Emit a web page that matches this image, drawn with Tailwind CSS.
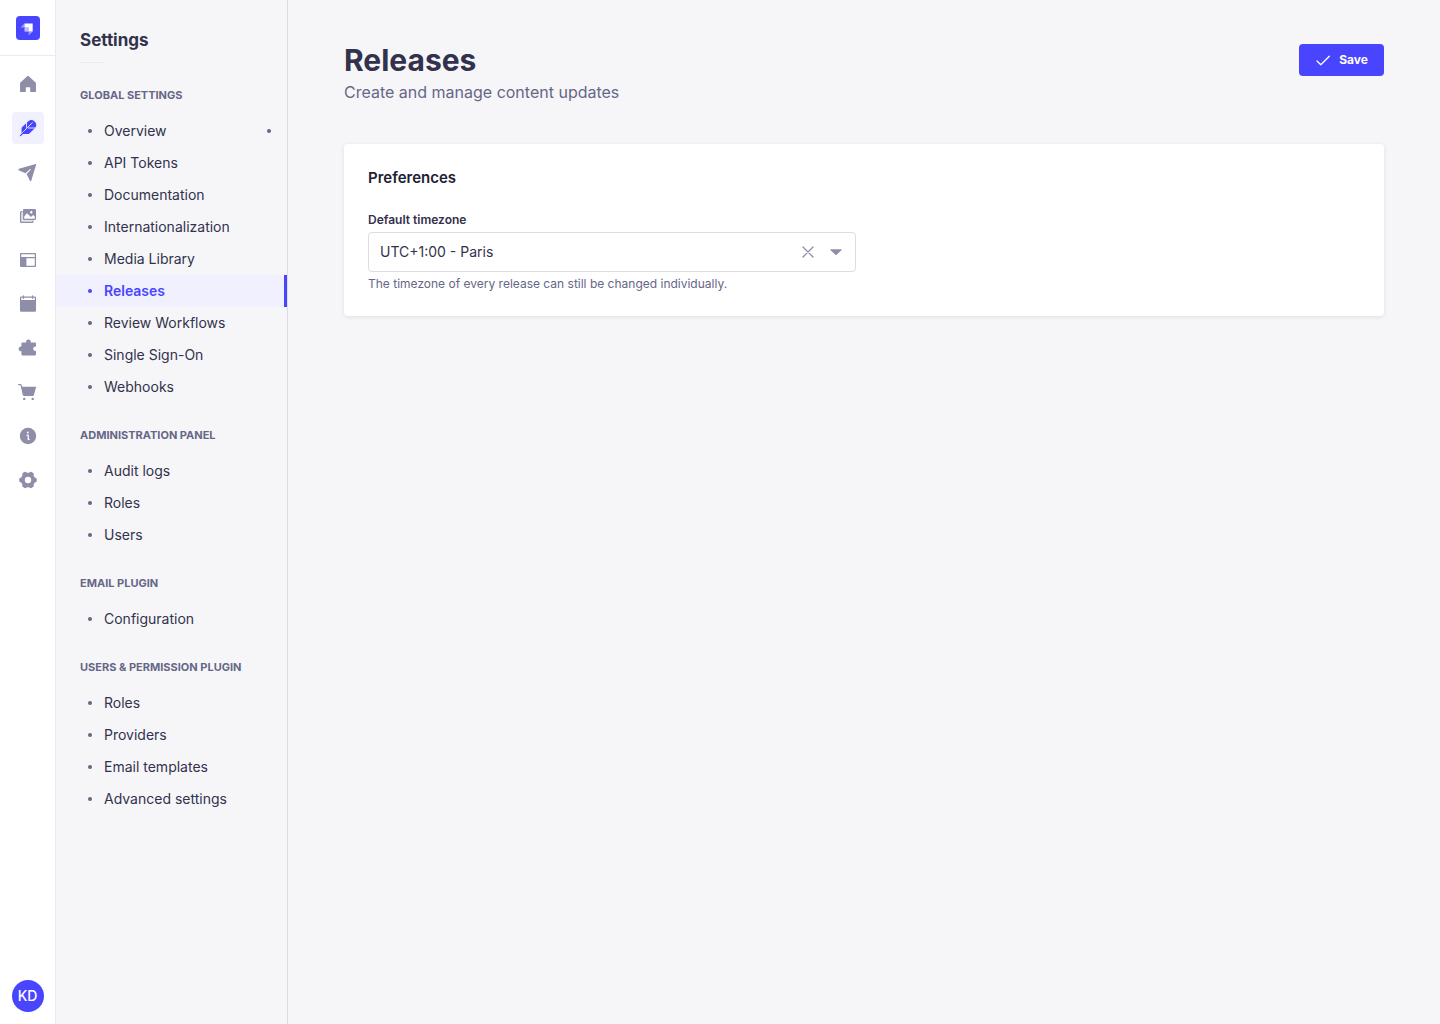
<!DOCTYPE html>
<html lang="en">
<head>
<meta charset="utf-8">
<meta name="viewport" content="width=device-width, initial-scale=1">
<title>Releases - Settings</title>
<script src="https://cdn.jsdelivr.net/npm/@tailwindcss/browser@4"></script>
</head>
<body class="flex min-h-screen bg-[#f6f6f9] font-['Inter',sans-serif] text-sm text-[#32324d]">

<nav aria-label="Main" class="flex w-14 shrink-0 flex-col items-center border-r border-[#eaeaef] bg-white pb-3 text-[#8e8ea9]">
  <a href="#" aria-label="Dashboard" class="flex h-14 w-full items-center justify-center border-b border-[#eaeaef]">
    <svg class="size-6" viewBox="0 0 24 24">
      <rect width="24" height="24" rx="4" fill="#4945ff"/>
      <path d="M8.500 7.400h8.200v8.200h-4.100V11.500H8.500z" fill="#fff"/>
      <path d="M8.500 7.400v4.100H4.400z M12.600 15.600h4.100l-4.100 4z" fill="#fff" opacity=".45"/>
      <path d="M8.500 11.500h4.100v4.100H8.500z" fill="#fff" opacity=".65"/>
    </svg>
  </a>
  <ul class="flex flex-col gap-3 pt-3">
    <li><a href="#" aria-label="Home" class="flex size-8 items-center justify-center rounded">
      <svg class="size-5" viewBox="0 0 20 20" fill="currentColor"><path d="M9.200 2.200a1.200 1.200 0 0 1 1.600 0l6.500 6c.4.400.7.900.7 1.500v7.300c0 .6-.4 1-1 1h-4.200a.6.600 0 0 1-.6-.6v-3.600a.6.600 0 0 0-.6-.6H8.400a.6.600 0 0 0-.6.600v3.600a.6.600 0 0 1-.6.600H3c-.6 0-1-.4-1-1V9.700c0-.6.300-1.100.7-1.500z"/></svg>
    </a></li>
    <li><a href="#" aria-label="Content Manager" class="flex size-8 items-center justify-center rounded bg-[#f0f0ff] text-[#4945ff]">
      <svg class="size-5" viewBox="0 0 20 20" fill="none" stroke-linecap="round"><path d="M10.600 2.900a5 5 0 0 1 7 6.600l-6.200 6c-.4.400-.9.600-1.400.6H4.100L3.600 15v-4.700c0-.5.200-1 .6-1.400z" fill="currentColor"/><path d="M8.500 4v5.300M10.400 10h8.400M4 15l10.300-10.200" stroke="#f0f0ff" stroke-width=".9"/><path d="m2.500 17.600 4.200-4.200" stroke="currentColor" stroke-width="1.200"/></svg>
    </a></li>
    <li><a href="#" aria-label="Releases" class="flex size-8 items-center justify-center rounded">
      <svg class="size-5" viewBox="0 0 20 20" fill="currentColor"><path d="M17.700 1.900c.3-.1.600.2.500.5l-4.900 16.200c-.2.700-1.100.7-1.400.1l-3.300-6.700 3.900-4.100c.5-.6-.1-1.100-.6-.7L7.600 11.200 1.100 8.600C.4 8.300.3 7.100 1 6.800z"/></svg>
    </a></li>
    <li><a href="#" aria-label="Media Library" class="flex size-8 items-center justify-center rounded">
      <svg class="size-5" viewBox="0 0 20 20"><path d="M2.700 6.200v10h11.900v-2.700H5V5.800z" fill="#8e8ea9" opacity=".25"/><path d="M4.500 5.700H3.300a.7.700 0 0 0-.7.700v9.300c0 .4.300.7.700.7h11c.4 0 .7-.3.700-.7v-1.200" fill="none" stroke="#8e8ea9" stroke-width="1.200"/><path fill="#8e8ea9" fill-rule="evenodd" d="M6 3h11a1 1 0 0 1 1 1v9a1 1 0 0 1-1 1H6a1 1 0 0 1-1-1V4a1 1 0 0 1 1-1zm7.300 2.100a1.200 1.200 0 1 0 0 2.400 1.200 1.200 0 0 0 0-2.400zM6.200 10.600v2.200h10.600v-2.200l-1.700-1.600-2.200 2.100-4-3.800z"/></svg>
    </a></li>
    <li><a href="#" aria-label="Content-Type Builder" class="flex size-8 items-center justify-center rounded">
      <svg class="size-5" viewBox="0 0 20 20" fill="currentColor" fill-rule="evenodd"><path d="M3 3h14a1 1 0 0 1 1 1v12a1 1 0 0 1-1 1H3a1 1 0 0 1-1-1V4a1 1 0 0 1 1-1zm.2 1.200v2.900h13.600V4.200zM8.400 8.300v7.500h8.400V8.300z"/></svg>
    </a></li>
    <li><a href="#" aria-label="Calendar" class="flex size-8 items-center justify-center rounded">
      <svg class="size-5" viewBox="0 0 20 20" fill="currentColor" fill-rule="evenodd"><path d="M5.500 1.200c.4 0 .6.300.6.600v.7h7.800v-.7c0-.8 1.200-.8 1.200 0v.7H17a1 1 0 0 1 1 1v13a1.300 1.300 0 0 1-1.300 1.300H3.300A1.300 1.300 0 0 1 2 16.500v-13a1 1 0 0 1 1-1h1.900v-.7c0-.3.200-.6.600-.6zM3.200 3.700v2.200h13.600V3.700h-1.700v.6c0 .8-1.200.8-1.200 0v-.6H6.100v.6c0 .8-1.200.8-1.200 0v-.6z"/></svg>
    </a></li>
    <li><a href="#" aria-label="Plugins" class="flex size-8 items-center justify-center rounded">
      <svg class="size-5" viewBox="0 0 20 20" fill="currentColor"><path d="M16.800 17.500H4.600c-.7 0-1.200-.6-1.200-1.200v-3.200a2.300 2.300 0 1 1 0-4.500V5.600c0-.7.500-1.200 1.200-1.200h3.600a2.300 2.300 0 1 1 4.400 0h4.200c.7 0 1.200.5 1.200 1.200v3a2.200 2.200 0 1 0 0 4.200v3.500c0 .6-.5 1.200-1.200 1.200z"/></svg>
    </a></li>
    <li><a href="#" aria-label="Marketplace" class="flex size-8 items-center justify-center rounded">
      <svg class="size-5" viewBox="0 0 20 20" fill="currentColor"><path d="M.6 2h1.700c.7 0 1.200.4 1.400 1l.5 1.800h14l-2.300 8.300c-.2.600-.7 1-1.300 1H6.100c-.6 0-1.100-.4-1.300-1L2.500 3.300c0-.1-.1-.1-.2-.1H.6C-.2 3.200-.2 2 .6 2z"/><circle cx="6.200" cy="16.900" r="1.200"/><circle cx="14.700" cy="16.900" r="1.200"/></svg>
    </a></li>
    <li><a href="#" aria-label="Information" class="flex size-8 items-center justify-center rounded">
      <svg class="size-5" viewBox="0 0 20 20"><circle cx="10" cy="10" r="8.200" fill="#8e8ea9"/><circle cx="9.800" cy="6.500" r="1" fill="#fff"/><path d="M9.100 9.200h.6c.3 0 .5.200.5.500v3.400c0 .3.200.5.500.5h.5" fill="none" stroke="#fff" stroke-width="1.300" stroke-linecap="round"/></svg>
    </a></li>
    <li><a href="#" aria-label="Settings" class="flex size-8 items-center justify-center rounded">
      <svg class="size-5" viewBox="0 0 20 20" fill="currentColor" fill-rule="evenodd"><path d="m18.300 8.200-1.700-.9-.9-1.500v-2c0-.3-.1-.5-.3-.6a8.600 8.600 0 0 0-2.500-1.400.7.700 0 0 0-.6.100L10.900 2.800H9.100L7.700 1.900a.7.700 0 0 0-.6-.1 8.600 8.600 0 0 0-2.500 1.400c-.2.100-.3.300-.3.600v2l-.9 1.500-1.700.9c-.3.200-.4.300-.4.500a7.300 7.300 0 0 0 0 2.600c0 .2.100.4.400.5l1.700.9.900 1.500v2c0 .3.100.5.300.6.800.6 1.600 1.100 2.500 1.400.2.100.4 0 .6-.1l1.400-.9h1.800l1.400.9c.2.100.4.200.6.100a8.600 8.600 0 0 0 2.500-1.400c.2-.1.300-.3.300-.6v-2l.9-1.500 1.700-.9c.3-.1.400-.3.400-.5a7.300 7.300 0 0 0 0-2.600c0-.2-.1-.3-.4-.5zM10 13.200a3.200 3.200 0 1 1 0-6.400 3.200 3.200 0 0 1 0 6.400z"/></svg>
    </a></li>
  </ul>
  <button type="button" aria-label="Account: KD" class="mt-auto flex size-8 items-center justify-center rounded-full bg-[#4945ff] text-sm font-medium text-white">KD</button>
</nav>

<aside class="w-58 shrink-0 border-r border-[#dcdce4] pt-7 pb-6">
  <h2 class="px-6 text-[17px] leading-6 font-bold">Settings</h2>
  <hr class="mt-2.5 mb-6 ml-6 w-6 border-[#eaeaef]">
  <nav aria-label="Settings" class="flex flex-col gap-6">
    <section>
      <h3 class="mb-3 px-6 text-[11px] leading-4 font-bold text-[#666687]">GLOBAL SETTINGS</h3>
      <ul>
        <li><a href="#" class="flex h-8 items-center gap-3 pr-4 pl-8"><span class="size-1 rounded-full bg-[#666687]"></span>Overview<span class="ml-auto size-1 rounded-full bg-[#666687]"></span></a></li>
        <li><a href="#" class="flex h-8 items-center gap-3 pr-4 pl-8"><span class="size-1 rounded-full bg-[#666687]"></span>API Tokens</a></li>
        <li><a href="#" class="flex h-8 items-center gap-3 pr-4 pl-8"><span class="size-1 rounded-full bg-[#666687]"></span>Documentation</a></li>
        <li><a href="#" class="flex h-8 items-center gap-3 pr-4 pl-8"><span class="size-1 rounded-full bg-[#666687]"></span>Internationalization</a></li>
        <li><a href="#" class="flex h-8 items-center gap-3 pr-4 pl-8"><span class="size-1 rounded-full bg-[#666687]"></span>Media Library</a></li>
        <li><a href="#" aria-current="page" class="flex h-8 items-center gap-3 border-r-3 border-[#4945ff] bg-[#f0f0ff] pr-4 pl-8 font-semibold text-[#4945ff]"><span class="size-1 rounded-full bg-[#4945ff]"></span>Releases</a></li>
        <li><a href="#" class="flex h-8 items-center gap-3 pr-4 pl-8"><span class="size-1 rounded-full bg-[#666687]"></span>Review Workflows</a></li>
        <li><a href="#" class="flex h-8 items-center gap-3 pr-4 pl-8"><span class="size-1 rounded-full bg-[#666687]"></span>Single Sign-On</a></li>
        <li><a href="#" class="flex h-8 items-center gap-3 pr-4 pl-8"><span class="size-1 rounded-full bg-[#666687]"></span>Webhooks</a></li>
      </ul>
    </section>
    <section>
      <h3 class="mb-3 px-6 text-[11px] leading-4 font-bold text-[#666687]">ADMINISTRATION PANEL</h3>
      <ul>
        <li><a href="#" class="flex h-8 items-center gap-3 pr-4 pl-8"><span class="size-1 rounded-full bg-[#666687]"></span>Audit logs</a></li>
        <li><a href="#" class="flex h-8 items-center gap-3 pr-4 pl-8"><span class="size-1 rounded-full bg-[#666687]"></span>Roles</a></li>
        <li><a href="#" class="flex h-8 items-center gap-3 pr-4 pl-8"><span class="size-1 rounded-full bg-[#666687]"></span>Users</a></li>
      </ul>
    </section>
    <section>
      <h3 class="mb-3 px-6 text-[11px] leading-4 font-bold text-[#666687]">EMAIL PLUGIN</h3>
      <ul>
        <li><a href="#" class="flex h-8 items-center gap-3 pr-4 pl-8"><span class="size-1 rounded-full bg-[#666687]"></span>Configuration</a></li>
      </ul>
    </section>
    <section>
      <h3 class="mb-3 px-6 text-[11px] leading-4 font-bold text-[#666687]">USERS &amp; PERMISSION PLUGIN</h3>
      <ul>
        <li><a href="#" class="flex h-8 items-center gap-3 pr-4 pl-8"><span class="size-1 rounded-full bg-[#666687]"></span>Roles</a></li>
        <li><a href="#" class="flex h-8 items-center gap-3 pr-4 pl-8"><span class="size-1 rounded-full bg-[#666687]"></span>Providers</a></li>
        <li><a href="#" class="flex h-8 items-center gap-3 pr-4 pl-8"><span class="size-1 rounded-full bg-[#666687]"></span>Email templates</a></li>
        <li><a href="#" class="flex h-8 items-center gap-3 pr-4 pl-8"><span class="size-1 rounded-full bg-[#666687]"></span>Advanced settings</a></li>
      </ul>
    </section>
  </nav>
</aside>

<main class="min-w-0 flex-1 px-14 pt-10 pb-14">
  <header class="mb-10">
    <div class="flex items-center justify-between">
      <h1 class="text-3xl leading-10 font-bold">Releases</h1>
      <button type="button" class="flex h-8 items-center gap-2 rounded bg-[#4945ff] px-4 text-xs font-bold text-white">
        <svg class="size-4" viewBox="0 0 16 16" fill="none" stroke="currentColor" stroke-width="1.300" stroke-linecap="round" stroke-linejoin="round"><path d="m2 9 3.800 3.800L14.300 4.300"/></svg>
        Save
      </button>
    </div>
    <p class="text-base leading-6 text-[#666687]">Create and manage content updates</p>
  </header>

  <section class="rounded bg-white p-6 shadow-[0_1px_4px_rgba(33,33,52,0.1)]">
    <h2 class="text-[15px] leading-5 font-semibold text-[#212134]">Preferences</h2>
    <div class="mt-6 grid grid-cols-2 gap-4">
      <div class="flex flex-col gap-1">
        <label for="timezone" class="text-xs leading-4 font-semibold">Default timezone</label>
        <div class="relative">
          <select id="timezone" aria-describedby="timezone-hint" class="h-10 w-full appearance-none rounded border border-[#dcdce4] bg-white pr-20 pl-[11px] text-sm">
            <option selected>UTC+1:00 - Paris</option>
            <option>UTC+0:00 - London</option>
          </select>
          <div class="pointer-events-none absolute inset-y-0 right-3 flex items-center gap-3 text-[#8e8ea9]">
            <button type="button" aria-label="Clear timezone" class="pointer-events-auto">
              <svg class="size-4" viewBox="0 0 16 16" fill="none" stroke="currentColor" stroke-width="1.300" stroke-linecap="round"><path d="m3 3 10 10M13 3 3 13"/></svg>
            </button>
            <svg class="size-4" viewBox="0 0 16 16" fill="currentColor"><path d="M3 5.200h10c.6 0 .8.600.4 1l-4.800 4.600a.9.900 0 0 1-1.200 0L2.600 6.200c-.4-.4-.2-1 .4-1z"/></svg>
          </div>
        </div>
        <p id="timezone-hint" class="text-xs leading-4 text-[#666687]">The timezone of every release can still be changed individually.</p>
      </div>
    </div>
  </section>
</main>
</body>
</html>
